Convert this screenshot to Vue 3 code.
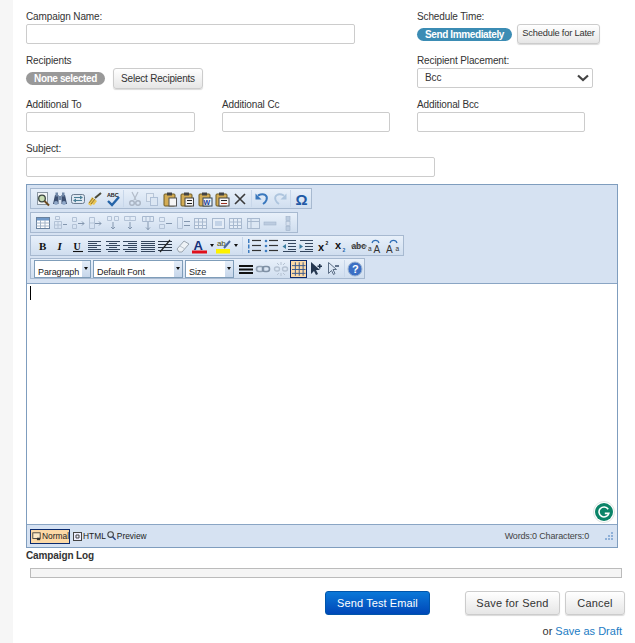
<script setup>
const L = (d, c = '#333', w = 1) => `<path d="${d}" fill="none" stroke="${c}" stroke-width="${w}"/>`
const F = (d, c = '#333') => `<path d="${d}" fill="${c}"/>`
const T = (s, x, y, size, c, extra = '', fam = 'Liberation Sans') => `<text x="${x}" y="${y}" font-size="${size}" fill="${c}" font-family="${fam}" ${extra}>${s}</text>`
const clip = (inner) => `<rect x="2" y="3" width="11" height="12" rx="1" fill="#d3ac55" stroke="#6d5a24"/><rect x="5" y="1.5" width="5" height="3" fill="#444"/>${inner}`
const lines = (rows, c = '#34465e', w = 1) => rows.map(([x1, x2, y]) => L(`M${x1} ${y + .5}H${x2}`, c, w)).join('')
const tbl = (extra = '') => `<g stroke="#b3c2d6" fill="none"><path d="M2.5 6.5h7v7h-7z"/><path d="M6 6.5v7M2.5 10h7"/></g>${extra}`
const ar = (d) => L(d, '#8497af')

const I = {
  preview: `<rect x="2.5" y="1.5" width="10" height="12" fill="#f3f5f7" stroke="#8b98a4"/><circle cx="7" cy="7.5" r="3.3" fill="#c7dcb2" stroke="#3a4640" stroke-width="1.3"/>` + L('M9.5 10l4.5 4.5', '#6b4a20', 2),
  find: F('M1 13l2-9h3.5v9zM9.5 4H13l2 9H9.5z', '#3c4f70') + F('M3.5 1.5h2.5v4H3.5zM10 1.5h2.5v4H10zM6.5 5h3v4h-3z', '#7088a8') + `<circle cx="4" cy="12" r="2" fill="#90a8c8"/><circle cx="12" cy="12" r="2" fill="#90a8c8"/>`,
  replace: `<rect x="1.5" y="3.5" width="13" height="9" rx="2" fill="#dfe8f2" stroke="#6b7c90"/>` + L('M4 6.5h8M12 9.5H4', '#4a7f96', 1.2) + F('M10 4.5l3 2-3 2zM6 7.5l-3 2 3 2z', '#4a7f96'),
  clean: F('M1 13l4-7 5 4-3 4-2-1-1 2z', '#e8c454') + L('M2 12l4-5M4 13l4-5', '#94762a') + L('M8 7l6-5', '#4a4a3a', 2),
  spell: T('ABC', 2, 5.5, 5.5, '#222', 'font-weight="bold"') + L('M3 10l4 4 7-8', '#2464a8', 2.4),
  cut: L('M5 1l4 8M11 1L7 9', '#b3bcc9', 1.2) + `<circle cx="5" cy="12" r="2.3" fill="none" stroke="#a9b4c3" stroke-width="1.4"/><circle cx="11" cy="12" r="2.3" fill="none" stroke="#a9b4c3" stroke-width="1.4"/>`,
  copy: `<rect x="2.5" y="2.5" width="7" height="8" fill="#e5ecf5" stroke="#b8c6d8"/><rect x="6.5" y="6.5" width="7" height="8" fill="#dbe6f3" stroke="#aebfd6"/>`,
  paste: clip(`<rect x="7" y="7" width="7.5" height="8" fill="#f6f6f6" stroke="#555"/>`),
  pastetext: clip(`<rect x="6" y="7" width="8.5" height="8" fill="#f6f6f6" stroke="#444"/>` + L('M8 9.5h5M8 12.5h5', '#222')),
  pasteword: clip(`<rect x="6" y="7" width="9" height="8" fill="#f2f5fb" stroke="#345"/>` + T('W', 6.5, 14, 7, '#1a3f9a', 'font-weight="bold"')),
  pastehtml: clip(`<rect x="5" y="7" width="10" height="8" fill="#f6f6f6" stroke="#444"/>` + L('M7 9.5h6', '#222') + L('M7 12.5h6', '#a03020')),
  del: L('M3 3l10 10M13 3L3 13', '#3a3a3a', 1.6),
  undo: L('M4 4.5c6-3 10 0 8.5 4.5-.5 1.5-2 3-3.5 4', '#3a78bd', 2) + F('M1.5 2.5v6h6z', '#3a78bd'),
  redo: L('M12 4.5c-6-3-10 0-8.5 4.5.5 1.5 2 3 3.5 4', '#aec5de', 1.8) + F('M14.5 2.5v6h-6z', '#aec5de'),
  omega: T('Ω', 1.5, 14, 15, '#1f5aa6', 'font-weight="bold"'),

  table: `<rect x="1.5" y="2.5" width="13" height="11" fill="#fff" stroke="#68819e"/><rect x="2" y="3" width="12" height="2.5" fill="#6f98c8"/>` + L('M1.5 8h13M1.5 11h13M5.5 5v8M10 5v8', '#a3b4c8'),
  r1: tbl() + ar('M11 9.5h4') + `<g stroke="#b3c2d6" fill="none"><path d="M3.5 1.5h4v3h-4z"/></g>`,
  r2: `<g stroke="#b3c2d6" fill="none"><path d="M2.5 2.5h4v4h-4zM2.5 9.5h4v4h-4z"/></g>` + ar('M8 8.5h6M12 6.5l2 2-2 2'),
  r3: `<g stroke="#b3c2d6" fill="none"><path d="M2.5 2.5h5v11h-5z"/><path d="M2.5 8h5"/></g>` + ar('M8 8.5h6M12 6.5l2 2-2 2'),
  c1: `<g stroke="#b3c2d6" fill="none"><path d="M2.5 1.5h4v4h-4zM9.5 1.5h4v4h-4z"/></g>` + ar('M8 7v7M6 12l2 2 2-2'),
  c2: `<g stroke="#b3c2d6" fill="none"><path d="M2.5 1.5h11v4h-11z"/><path d="M8 1.5v4"/></g>` + ar('M8 7v7M6 12l2 2 2-2'),
  c3: `<g stroke="#a8b9cf" fill="none"><path d="M2.5 1.5h11v5h-11z"/><path d="M6 1.5v5M10 1.5v5"/></g>` + ar('M8 7v8M6 12.5l2 2 2-2'),
  m1: `<g stroke="#b3c2d6" fill="none"><path d="M2.5 2.5h5v4h-5zM2.5 9.5h5v4h-5z"/></g>` + ar('M9 8.5h6'),
  m2: `<g stroke="#b3c2d6" fill="none"><path d="M2.5 2.5h5v11h-5z"/></g>` + ar('M9 6.5h6M9 10.5h6'),
  grid: `<rect x="2.5" y="3.5" width="12" height="10" fill="#e5edf7" stroke="#a8b9cf"/>` + L('M6.5 3.5v10M10.5 3.5v10M2.5 7h12M2.5 10.5h12', '#a8b9cf'),
  cellp: `<rect x="2.5" y="3.5" width="12" height="10" fill="#e5edf7" stroke="#a8b9cf"/><rect x="5" y="6" width="7" height="5" fill="#c3d3e7"/>`,
  cellh: `<rect x="2.5" y="3.5" width="12" height="10" fill="#dce7f4" stroke="#a8b9cf"/>` + L('M6 3.5v10M2.5 6.5h12', '#a8b9cf'),
  dash: `<rect x="2" y="7" width="12" height="3" fill="#bccce0" stroke="#a3b5cc" stroke-width=".6"/>`,
  vbar: `<rect x="6" y="1.5" width="4" height="4" fill="#bccce0" stroke="#9fb1c8" stroke-width=".6"/><rect x="6" y="6.5" width="4" height="4" fill="#d6e0ee" stroke="#9fb1c8" stroke-width=".6"/><rect x="6" y="11.5" width="4" height="4" fill="#bccce0" stroke="#9fb1c8" stroke-width=".6"/>`,

  bold: T('B', 4, 12, 11, '#111', 'font-weight="bold"', 'Liberation Serif'),
  italic: T('I', 5.5, 12, 11, '#111', 'font-weight="bold" font-style="italic"', 'Liberation Serif'),
  under: T('U', 3.5, 11.5, 10, '#111', 'font-weight="bold"', 'Liberation Serif') + L('M3 13.5h10', '#111', 1.1),
  al: lines([[1, 14, 3], [1, 10, 5], [1, 14, 7], [1, 10, 9], [1, 14, 11], [1, 14, 13]]),
  ac: lines([[1, 15, 3], [4, 12, 5], [1, 15, 7], [4, 12, 9], [1, 15, 11], [3, 13, 13]]),
  ar: lines([[1, 15, 3], [6, 15, 5], [1, 15, 7], [6, 15, 9], [1, 15, 11], [3, 15, 13]]),
  aj: lines([[1, 15, 3], [1, 15, 5], [1, 15, 7], [1, 15, 9], [1, 15, 11], [1, 15, 13]]),
  hr: lines([[1, 15, 3], [1, 15, 6], [1, 15, 9], [1, 15, 12]], '#2a3648') + L('M3 14L13 2', '#222', 1.2),
  eraser: `<path d="M2 11l7-8 5 3-7 8H4z" fill="#eef2f6" stroke="#9aa4af"/>` + L('M5 8l5 3', '#bcc4cd'),
  color: T('A', 1.5, 11.5, 13, '#14307a', 'font-weight="bold"') + `<rect x="0" y="12.5" width="15" height="3" fill="#e0101c"/>`,
  hilite: T('ab', 1, 8, 8, '#4a4a20') + L('M8 10l6-7', '#4a68a0', 2) + `<rect x="0" y="11" width="14" height="4.5" fill="#fdf200"/>`,
  ol: F('M2 1h1.5v4H2zM2 6.5h1.5v4H2zM2 12h1.5v3H2z', '#3d7cc0') + lines([[6, 15, 2], [6, 15, 7], [6, 15, 12]], '#333', 1.2),
  ul: `<circle cx="3" cy="3" r="1.3" fill="#3d7cc0"/><circle cx="3" cy="8" r="1.3" fill="#3d7cc0"/><circle cx="3" cy="13" r="1.3" fill="#3d7cc0"/>` + lines([[6, 15, 2], [6, 15, 7], [6, 15, 12]], '#333', 1.2),
  outdent: lines([[2, 15, 2], [7, 15, 5], [7, 15, 8], [7, 15, 11], [2, 15, 13]]) + F('M5 6v5L1.5 8.5z', '#3a7ca0'),
  indent: lines([[2, 15, 2], [7, 15, 5], [7, 15, 8], [7, 15, 11], [2, 15, 13]]) + F('M1.5 6v5L5 8.5z', '#3a7ca0'),
  sup: T('x', 2, 12.5, 11, '#111', 'font-weight="bold"') + T('2', 9.5, 7, 5, '#111', 'font-weight="bold"'),
  sub: T('x', 2, 10.5, 11, '#111', 'font-weight="bold"') + T('2', 9.5, 14, 5, '#2464a8', 'font-weight="bold"'),
  strike: T('abc', .5, 11, 8.5, '#333', 'font-weight="bold"') + L('M0 8h16', '#666'),
  grow: T('a', 0, 13, 6.5, '#333') + T('A', 5.5, 15, 10, '#333') + L('M4 5c1-3.5 6-3.5 7 0', '#2d6cb5', 1.2),
  shrink: T('A', 0, 15, 10, '#333') + T('a', 9.5, 13, 6.5, '#333') + L('M4 5c1-3.5 6-3.5 7 0', '#2d6cb5', 1.2),

  rule: `<rect x="1" y="4" width="14" height="2" fill="#111"/><rect x="1" y="7.5" width="14" height="2" fill="#111"/><rect x="1" y="11" width="14" height="2" fill="#111"/>`,
  link: `<rect x="1.5" y="5.5" width="7" height="5" rx="2.5" fill="none" stroke="#93a2b4" stroke-width="1.6"/><rect x="7.5" y="5.5" width="7" height="5" rx="2.5" fill="none" stroke="#7f90a4" stroke-width="1.6"/>`,
  unlink: `<rect x="1.5" y="6" width="5" height="4" rx="2" fill="none" stroke="#b5c2d2" stroke-width="1.4"/><rect x="9.5" y="6" width="5" height="4" rx="2" fill="none" stroke="#b5c2d2" stroke-width="1.4"/>` + L('M8 1v3M8 12v3M4 2l2 2M12 2l-2 2M4 14l2-2M12 14l-2-2', '#b5c2d2'),
  bordersOn: L('M1 4.5h14M1 8.5h14M1 12.5h14M4.5 1v14M8.5 1v14M12.5 1v14', '#3b5a8c'),
  absIn: F('M3 1v12l3-3 2 4 2-1-2-4h4z', '#24364f') + F('M11 3h1.5v1.5H14V6h-1.5v1.5H11V6H9.5V4.5H11z', '#24364f'),
  absOut: L('M3.5 1.5v11l3-3 2 4 1.5-1-2-4h3.5z', '#5d6f86') + L('M10 5h4', '#2f4360', 1.4),
  help: `<circle cx="8" cy="8" r="7" fill="#3b6fc4" stroke="#9db4d2"/>` + T('?', 5, 12, 11, '#fff', 'font-weight="bold"')
}

const S = '|'
const rows = [
  ['preview', 'find', 'replace', 'clean', 'spell', S, 'cut', 'copy', 'paste', 'pastetext', 'pasteword', 'pastehtml', 'del', S, 'undo', 'redo', S, 'omega'],
  ['table', 'r1', 'r2', 'r3', 'c1', 'c2', 'c3', 'm1', 'm2', 'grid', 'cellp', 'grid', 'cellh', 'dash', 'vbar'],
  ['bold', 'italic', 'under', 'al', 'ac', 'ar', 'aj', 'hr', 'eraser', '>color', '>hilite', S, 'ol', 'ul', 'outdent', 'indent', 'sup', 'sub', 'strike', 'grow', 'shrink']
]
const row4 = ['rule', 'link', 'unlink', '*bordersOn', 'absIn', 'absOut', S, 'help']
const parse = (it) => ({ sep: it === S, split: it[0] === '>', on: it[0] === '*', svg: I[it.replace(/^[>*]/, '')] })
const bars = rows.map((r) => r.map(parse))
const row4Items = row4.map(parse)
const combos = [
  { t: 'Paragraph', w: 57 },
  { t: 'Default Font', w: 90 },
  { t: 'Size', w: 49 }
]
</script>

<template>
  <div class="page">
    <form class="grid" @submit.prevent>
      <div class="field wide">
        <label>Campaign Name:</label>
        <input class="input w329" type="text" />
      </div>
      <div class="field">
        <label>Schedule Time:</label>
        <div class="inline gap5">
          <span class="pill blue">Send Immediately</span>
          <button type="button" class="btn later">Schedule for Later</button>
        </div>
      </div>
      <div class="field wide">
        <label>Recipients</label>
        <div class="inline gap8">
          <span class="pill gray">None selected</span>
          <button type="button" class="btn pick">Select Recipients</button>
        </div>
      </div>
      <div class="field">
        <label>Recipient Placement:</label>
        <div class="fakeselect">
          <span class="selval">Bcc</span>
          <svg width="12" height="8" viewBox="0 0 12 8"><path d="M1 1.5l5 4.5 5-4.5" fill="none" stroke="#444" stroke-width="2.2" /></svg>
        </div>
      </div>
      <div class="field">
        <label>Additional To</label>
        <input class="input w169" type="text" />
      </div>
      <div class="field">
        <label>Additional Cc</label>
        <input class="input w168" type="text" />
      </div>
      <div class="field">
        <label>Additional Bcc</label>
        <input class="input w168" type="text" />
      </div>
      <div class="field full subject">
        <label>Subject:</label>
        <input class="input w409" type="text" />
      </div>
    </form>

    <section class="editor">
      <div class="toolbars">
        <div v-for="(bar, i) in bars" :key="i" class="bar">
          <template v-for="(it, j) in bar" :key="j">
            <span v-if="it.sep" class="sep"></span>
            <span v-else-if="it.split" class="tool split">
              <svg width="16" height="16" viewBox="0 0 16 16" v-html="it.svg"></svg>
              <i class="tri"></i>
            </span>
            <span v-else class="tool"><svg width="16" height="16" viewBox="0 0 16 16" v-html="it.svg"></svg></span>
          </template>
        </div>
        <div class="bar bar4">
          <span v-for="c in combos" :key="c.t" class="combo" :style="{ width: c.w + 'px' }">
            <span class="combotext">{{ c.t }}</span>
            <span class="comboarrow"><i class="tri"></i></span>
          </span>
          <template v-for="(it, j) in row4Items" :key="j">
            <span v-if="it.sep" class="sep"></span>
            <span v-else class="tool" :class="{ on: it.on }"><svg width="16" height="16" viewBox="0 0 16 16" v-html="it.svg"></svg></span>
          </template>
        </div>
      </div>
      <div class="content">
        <span class="caret"></span>
        <span class="grammarly">
          <svg width="22" height="22" viewBox="0 0 22 22">
            <circle cx="11" cy="11" r="10.5" fill="#fff" stroke="#dfe5e3" />
            <circle cx="11" cy="11" r="9" fill="#0b8468" />
            <path d="M15.2 8.2a5 5 0 1 0 .6 4.2h-4" fill="none" stroke="#fff" stroke-width="1.6" />
          </svg>
        </span>
      </div>
      <div class="status">
        <span class="mode active">
          <svg width="11" height="11" viewBox="0 0 11 11"><rect x="1" y="1" width="9" height="7" fill="#fbe9c8" stroke="#333" /><path d="M6 7h4v3H6z" fill="#333" /></svg>Normal
        </span>
        <span class="mode">
          <svg width="9" height="9" viewBox="0 0 9 9"><rect x=".5" y=".5" width="8" height="8" fill="#eef" stroke="#444" /><path d="M3 3h3v3H3z" fill="none" stroke="#444" /></svg>HTML
        </span>
        <span class="mode prev">
          <svg width="9" height="10" viewBox="0 0 9 10"><circle cx="3.6" cy="3.6" r="2.8" fill="none" stroke="#444" stroke-width="1.1" /><path d="M5.6 5.8l3 3" stroke="#23408a" stroke-width="1.5" /></svg>Preview
        </span>
        <span class="count">Words:0 Characters:0</span>
        <svg class="grip" width="8" height="8" viewBox="0 0 8 8"><path d="M6 0h2v2H6zM3 3h2v2H3zM6 3h2v2H6zM0 6h2v2H0zM3 6h2v2H3zM6 6h2v2H6z" fill="#8fb0d8" /></svg>
      </div>
    </section>

    <h4 class="logtitle">Campaign Log</h4>
    <div class="logbar"></div>

    <div class="actions">
      <button type="button" class="primary">Send Test Email</button>
      <button type="button" class="btn big save">Save for Send</button>
      <button type="button" class="btn big cancel">Cancel</button>
    </div>
    <p class="draft">or <a href="#" @click.prevent>Save as Draft</a></p>
  </div>
</template>

<style>
html, body { margin: 0; background: #fff; }
</style>

<style scoped>
.page {
  box-sizing: border-box;
  width: 635px;
  height: 643px;
  overflow: hidden;
  background: #fff;
  border-left: 13px solid #f6f6f6;
  padding: 10px 0 0 13px;
  font-family: "Liberation Sans", Arial, sans-serif;
  font-size: 10px;
  letter-spacing: -.12px;
  color: #333;
}
.grid {
  display: grid;
  grid-template-columns: 196px 195px 1fr;
  grid-auto-rows: 34px;
  row-gap: 10px;
}
.wide { grid-column: span 2; }
.full { grid-column: 1 / -1; }
label {
  display: block;
  height: 12px;
  line-height: 14px;
  margin-bottom: 2px;
  font-size: 10px;
}
.subject label { margin-bottom: 3px; }
.input {
  display: block;
  box-sizing: border-box;
  height: 20px;
  padding: 0 6px;
  border: 1px solid #ccc;
  border-radius: 2px;
  background: #fff;
  outline: none;
}
.w329 { width: 329px; }
.w169 { width: 169px; }
.w168 { width: 168px; }
.w409 { width: 409px; }
.inline { display: flex; align-items: center; height: 20px; }
.gap5 { gap: 5px; }
.gap8 { gap: 8px; }
.pill {
  display: inline-block;
  height: 13px;
  line-height: 13px;
  border-radius: 7px;
  color: #fff;
  font-size: 10px;
  font-weight: bold;
  letter-spacing: -.38px;
  text-align: center;
}
.blue { width: 95px; background: #3b8cb4; }
.gray { width: 79px; background: #999; }
.btn {
  box-sizing: border-box;
  border: 1px solid #ccc;
  border-radius: 3px;
  background: linear-gradient(#fff, #e6e6e6);
  box-shadow: 0 1px 1px rgba(0, 0, 0, .15);
  color: #333;
  font-family: inherit;
  font-size: 10px;
  letter-spacing: -.2px;
  padding: 0;
  white-space: nowrap;
}
.later { width: 83px; height: 20px; line-height: 14px; padding-bottom: 3px; font-size: 9.3px; }
.pick { width: 90px; height: 21px; }
.fakeselect {
  box-sizing: border-box;
  display: flex;
  align-items: center;
  justify-content: space-between;
  width: 176px;
  height: 20px;
  padding: 0 3px 0 7px;
  border: 1px solid #ccc;
  border-radius: 2px;
  font-size: 10px;
}
.selval { line-height: 16px; margin-top: -1px; }
.editor {
  box-sizing: border-box;
  width: 592px;
  height: 364px;
  margin-top: 8px;
  border: 1px solid #7f9dbe;
  display: flex;
  flex-direction: column;
}
.toolbars {
  box-sizing: border-box;
  height: 99px;
  flex: none;
  padding: 3px 0 0 3px;
  background: #d6e2f2;
  border-bottom: 1px solid #8aa5c4;
  display: flex;
  flex-direction: column;
  align-items: flex-start;
  gap: 2px;
}
.bar {
  box-sizing: border-box;
  display: flex;
  align-items: center;
  height: 21px;
  padding-left: 3px;
  border: 1px solid #a7b9d0;
  background: linear-gradient(#e8f0fa, #d0deef);
}
.bar:nth-child(2) { margin-top: 1px; }
.tool {
  box-sizing: border-box;
  width: 17.5px;
  height: 18px;
  display: flex;
  align-items: center;
  justify-content: center;
  flex: none;
}
.tool.split { width: 24.5px; justify-content: flex-start; gap: 2px; }
.tool.on {
  background: #fcd9a6;
  border: 1px solid #0a2a6e;
}
.sep {
  width: 1px;
  height: 17px;
  margin: 0 1.85px;
  background: #c8d7ea;
  flex: none;
}
.tri {
  display: block;
  width: 0;
  height: 0;
  border-left: 2.5px solid transparent;
  border-right: 2.5px solid transparent;
  border-top: 3px solid #111;
}
.combo {
  box-sizing: border-box;
  display: flex;
  height: 18px;
  margin-right: 2px;
  border: 1px solid #7f9db9;
  background: #fff;
  flex: none;
}
.combo:nth-child(3) { margin-right: 3px; }
.combotext {
  flex: 1;
  line-height: 16px;
  padding: 3px 0 0 3px;
  font-size: 9px;
  letter-spacing: -.1px;
  color: #222;
  overflow: hidden;
  white-space: nowrap;
}
.comboarrow {
  width: 8px;
  background: linear-gradient(#e4edf8, #c6d6ea);
  display: flex;
  align-items: center;
  justify-content: center;
}
.content {
  flex: 1;
  background: #fff;
  position: relative;
}
.caret {
  position: absolute;
  left: 3px;
  top: 2px;
  width: 1px;
  height: 14px;
  background: #000;
}
.grammarly {
  position: absolute;
  right: 2px;
  bottom: 1px;
  width: 22px;
  height: 22px;
}
.status {
  box-sizing: border-box;
  height: 23px;
  flex: none;
  display: flex;
  align-items: center;
  padding: 0 4px 0 3px;
  background: #d6e2f2;
  border-top: 1px solid #8aa5c4;
  font-size: 8.4px;
  letter-spacing: 0;
  color: #222;
}
.mode {
  box-sizing: border-box;
  display: flex;
  align-items: center;
  height: 15px;
  margin-right: 3px;
}
.mode.active {
  width: 40px;
  background: #fcd9a6;
  border: 1px solid #0a2a6e;
  padding-left: 1px;
}
.mode svg { margin-right: 1px; }
.prev { margin-left: -2px; }
.count { margin-left: auto; margin-right: 16px; color: #444; font-size: 9px; letter-spacing: -.15px; }
.logtitle {
  margin: 2px 0 0;
  height: 12px;
  line-height: 12px;
  font-size: 10px;
  font-weight: bold;
  color: #333;
}
.logbar {
  box-sizing: border-box;
  width: 592px;
  height: 10px;
  margin: 6px 0 0 4px;
  background: #f5f5f5;
  border: 1px solid #bbb;
}
.actions {
  display: flex;
  margin-top: 13px;
  padding-left: 299px;
}
.primary {
  box-sizing: border-box;
  width: 105px;
  height: 24px;
  padding: 0;
  border: 1px solid #0055aa;
  border-radius: 3px;
  background: linear-gradient(#0a78d8, #0047b8);
  color: #fff;
  font-family: inherit;
  font-size: 11px;
  letter-spacing: .1px;
}
.big {
  height: 24px;
  font-size: 11px;
  letter-spacing: .2px;
}
.save { width: 95px; margin-left: 35px; }
.cancel { width: 60px; margin-left: 5px; }
.draft {
  margin: 10px 0 0;
  width: 596px;
  text-align: right;
  font-size: 11px;
  line-height: 13px;
  letter-spacing: 0;
  color: #333;
}
.draft a { color: #1c7cc4; text-decoration: none; }
</style>
